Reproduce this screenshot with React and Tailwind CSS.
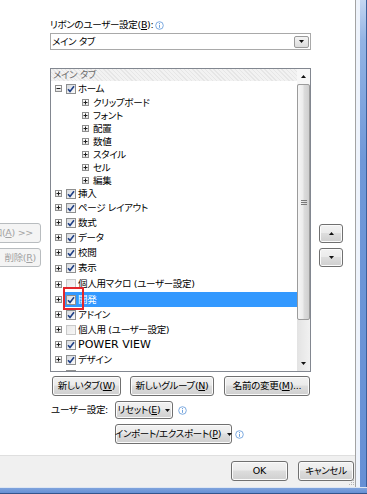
import React from 'react';

const U = ({ children }) => <span className="underline underline-offset-[1px]">{children}</span>;

const Btn = ({ className = '', children }) => (
  <div
    className={`flex items-center justify-center rounded-[3px] border border-[#707070] bg-[linear-gradient(to_bottom,#f2f2f2_0%,#ebebeb_45%,#dddddd_50%,#cfcfcf_100%)] shadow-[inset_0_0_0_1px_#fbfbfb] text-black whitespace-nowrap ${className}`}
  >
    {children}
  </div>
);

const DisBtn = ({ className = '', children }) => (
  <div
    className={`flex items-center rounded-[3px] border border-[#b8bcbf] bg-[#f4f4f4] text-[#a2a2a2] whitespace-nowrap ${className}`}
  >
    {children}
  </div>
);

const Info = () => (
  <svg width="9" height="9" viewBox="0 0 9 9" className="shrink-0">
    <circle cx="4.5" cy="4.5" r="3.8" fill="none" stroke="#6fa2dd" strokeWidth="0.9" />
    <rect x="4" y="2" width="1" height="1" fill="#6fa2dd" />
    <rect x="4" y="3.8" width="1" height="3" fill="#6fa2dd" />
  </svg>
);

const TriDown = () => (
  <svg width="5" height="3" viewBox="0 0 5 3" className="shrink-0">
    <path d="M0 0H5L2.5 3Z" fill="#111" />
  </svg>
);

const TriUp = () => (
  <svg width="5" height="3" viewBox="0 0 5 3" className="shrink-0">
    <path d="M0 3H5L2.5 0Z" fill="#111" />
  </svg>
);

const Exp = ({ open }) => (
  <span className="w-[7px] h-[7px] shrink-0 border border-[#8f8f8f] bg-[linear-gradient(to_bottom,#ffffff,#e2e2e2)] flex items-center justify-center">
    <svg width="5" height="5" viewBox="0 0 5 5">
      <path d="M0.5 2.5H4.5" stroke="#1f1f1f" strokeWidth="1" />
      {!open && <path d="M2.5 0.5V4.5" stroke="#1f1f1f" strokeWidth="1" />}
    </svg>
  </span>
);

const Check = ({ checked }) => (
  <span
    className={`w-[10px] h-[10px] shrink-0 border ${
      checked ? 'border-[#8e8f8f] bg-[linear-gradient(135deg,#d6d9de,#fbfbfb)]' : 'border-[#c9c9c9] bg-[linear-gradient(135deg,#e8e8e8,#f7f7f7)]'
    } flex items-center justify-center`}
  >
    {checked && (
      <svg width="8" height="8" viewBox="0 0 8 8">
        <path d="M1 4.2L3 6.4L7 1.2" fill="none" stroke="#1e3f86" strokeWidth="1.6" />
      </svg>
    )}
  </span>
);

const rows = [
  { t: 'ホーム', h: 'h-[15px]', open: true },
  { t: 'クリップボード', child: true },
  { t: 'フォント', child: true },
  { t: '配置', child: true },
  { t: '数値', child: true },
  { t: 'スタイル', child: true },
  { t: 'セル', child: true },
  { t: '編集', child: true },
  { t: '挿入', h: 'h-[13px]' },
  { t: 'ページ レイアウト' },
  { t: '数式' },
  { t: 'データ' },
  { t: '校閲' },
  { t: '表示', h: 'h-[16px]' },
  { t: '個人用マクロ (ユーザー設定)', h: 'h-[16px]', unchecked: true },
  { t: '開発', sel: true },
  { t: 'アドイン' },
  { t: '個人用 (ユーザー設定)', unchecked: true },
  { t: 'POWER VIEW', latin: true },
  { t: 'デザイン' },
  { t: '' },
];

const Row = ({ r }) => {
  if (r.child) {
    return (
      <div className="h-[13px] shrink-0 flex items-center pl-[31px]">
        <Exp />
        <span className="ml-[4px] whitespace-nowrap">{r.t}</span>
      </div>
    );
  }
  return (
    <div className={`${r.h || 'h-[15px]'} shrink-0 flex items-center pl-[4px]`}>
      <Exp open={r.open} />
      <div
        className={`ml-[3px] flex-1 h-full flex items-center pl-[1px] gap-[2px] ${
          r.sel ? 'bg-[#3399ff] text-white' : ''
        }`}
      >
        <Check checked={!r.unchecked} />
        {r.latin ? (
          <span className="whitespace-nowrap text-[11px] tracking-[0px]">{r.t}</span>
        ) : (
          <span className="whitespace-nowrap">{r.t}</span>
        )}
      </div>
    </div>
  );
};

export default function App() {
  return (
    <div className="relative w-[367px] h-[494px] overflow-hidden flex flex-col bg-white text-[9.5px] leading-[12px] tracking-[-0.3px] text-black font-['DejaVu_Sans','Noto_Sans_CJK_JP',sans-serif] [font-feature-settings:'palt']">
      <div className="flex h-[487px] shrink-0">
        <div className="w-[355px] shrink-0 flex flex-col">
          {/* content */}
          <div className="h-[455px] shrink-0 flex bg-white">
            {/* left add/remove buttons */}
            <div className="w-[41px] shrink-0 pt-[223px] flex flex-col gap-[5px]">
              <DisBtn className="w-[61px] -ml-[20px] h-[20px] justify-end pr-[7px]">
                追加(<U>A</U>) &gt;&gt;
              </DisBtn>
              <DisBtn className="w-[61px] -ml-[20px] h-[19px] justify-end pr-[4px]">
                削除(<U>R</U>)
              </DisBtn>
            </div>

            {/* main column */}
            <div className="ml-[9px] w-[261px] shrink-0 flex flex-col pt-[18px]">
              <div className="h-[14px] flex items-center gap-[2px]">
                <span>
                  リボンのユーザー設定(<U>B</U>):
                </span>
                <Info />
              </div>
              <div className="mt-[1px] h-[17px] border border-[#a9a9a9] flex items-center justify-between pl-[1px] pr-[1px]">
                <span>メイン タブ</span>
                <div className="w-[15px] h-[12px] border border-[#9a9a9a] rounded-[2px] bg-[linear-gradient(to_bottom,#f4f4f4,#dcdcdc)] flex items-center justify-center">
                  <TriDown />
                </div>
              </div>

              {/* list box */}
              <div className="mt-[18px] h-[304px] border border-[#828790] flex">
                <div className="flex-1 flex flex-col overflow-hidden">
                  <div className="h-[12px] shrink-0 flex items-center pl-[2px] text-[#6a6a6a] bg-[repeating-linear-gradient(45deg,#e6e6e6_0px,#e6e6e6_1px,#f2f2f2_1px,#f2f2f2_3px)]">
                    メイン タブ
                  </div>
                  {rows.map((r, i) => (
                    <Row key={i} r={r} />
                  ))}
                </div>
                {/* scrollbar */}
                <div className="w-[13px] shrink-0 flex flex-col bg-[linear-gradient(to_right,#e3e3e3,#f1f1f1)]">
                  <div className="h-[15px] shrink-0 flex items-center justify-center bg-[#f7f7f7]">
                    <TriUp />
                  </div>
                  <div className="h-[236px] shrink-0 rounded-[2px] border border-[#9b9b9b] bg-[linear-gradient(to_right,#f6f6f6_0%,#ececec_45%,#dcdcdc_55%,#cfcfcf_100%)] flex items-center justify-center">
                    <svg width="6" height="5" viewBox="0 0 6 5">
                      <path d="M0 0.5H6M0 2.5H6M0 4.5H6" stroke="#7a7a7a" strokeWidth="1" />
                    </svg>
                  </div>
                  <div className="flex-1" />
                  <div className="h-[15px] shrink-0 flex items-center justify-center">
                    <TriDown />
                  </div>
                </div>
              </div>

              {/* buttons row */}
              <div className="mt-[4px] h-[20px] flex pl-[2px]">
                <Btn className="w-[69px] h-[20px]">
                  新しいタブ(<U>W</U>)
                </Btn>
                <Btn className="ml-[9px] w-[84px] h-[20px]">
                  新しいグループ(<U>N</U>)
                </Btn>
                <Btn className="ml-[10px] w-[86px] h-[20px]">
                  名前の変更(<U>M</U>)...
                </Btn>
              </div>

              <div className="mt-[5px] h-[18px] flex items-center">
                <span className="w-[65px] pl-[1px]">ユーザー設定:</span>
                <Btn className="w-[58px] h-[18px] gap-[5px]">
                  <span>
                    リセット(<U>E</U>)
                  </span>
                  <TriDown />
                </Btn>
                <span className="ml-[5px]">
                  <Info />
                </span>
              </div>

              <div className="mt-[5px] h-[20px] flex items-center pl-[65px]">
                <Btn className="w-[117px] h-[20px] gap-[6px]">
                  <span>
                    インポート/エクスポート(<U>P</U>)
                  </span>
                  <TriDown />
                </Btn>
                <span className="ml-[3px]">
                  <Info />
                </span>
              </div>
            </div>

            {/* up / down buttons */}
            <div className="ml-[8px] w-[24px] shrink-0 pt-[224px] flex flex-col gap-[5px]">
              <Btn className="h-[19px]">
                <TriUp />
              </Btn>
              <Btn className="h-[19px]">
                <TriDown />
              </Btn>
            </div>
          </div>

          {/* bottom band */}
          <div className="flex-1 relative bg-[#f0f0f0] border-t border-[#dfdfdf] flex items-start justify-end gap-[10px] pt-[5px] pr-[1px]">
            <Btn className="w-[57px] h-[20px] border-[#3c7fb1] shadow-[inset_0_0_0_1px_#bfe5f8] tracking-[0px]">OK</Btn>
            <Btn className="w-[56px] h-[20px]">キャンセル</Btn>
            <svg width="7" height="7" viewBox="0 0 7 7" className="absolute right-0 bottom-[1px]">
              <rect x="5" y="1" width="1" height="1" fill="#b5b5b5" />
              <rect x="3" y="3" width="1" height="1" fill="#b5b5b5" />
              <rect x="5" y="3" width="1" height="1" fill="#b5b5b5" />
              <rect x="1" y="5" width="1" height="1" fill="#b5b5b5" />
              <rect x="3" y="5" width="1" height="1" fill="#b5b5b5" />
              <rect x="5" y="5" width="1" height="1" fill="#b5b5b5" />
            </svg>
          </div>
        </div>

        {/* right window frame */}
        <div className="w-[12px] shrink-0 flex">
          <div className="w-[1px] bg-[#a3a3a3]" />
          <div className="w-[4px] bg-[#eef3fb]" />
          <div className="w-[6px] bg-[linear-gradient(to_bottom,#c3d6f1_0px,#93b4e4_40px,#6f98d8_160px,#6690d5_100%)]" />
          <div className="w-[1px] bg-[#3b5f99]" />
        </div>
      </div>

      {/* bottom window frame */}
      <div className="h-[7px] shrink-0 flex flex-col">
        <div className="h-[1px] bg-[#dde6f3]" />
        <div className="flex-1 bg-[linear-gradient(to_bottom,#7fa3dc,#6690d5)]" />
        <div className="h-[1px] bg-[#34558c]" />
      </div>

      {/* red annotation box */}
      <div className="absolute left-[63px] top-[287px] w-[21px] h-[23px] border-2 border-[#e3262b]" />
    </div>
  );
}
